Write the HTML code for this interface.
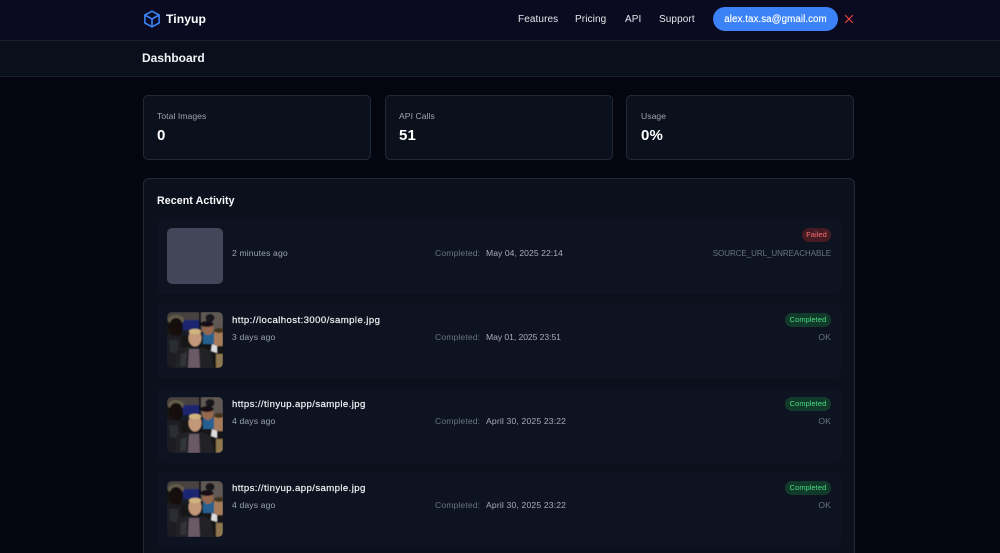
<!DOCTYPE html>
<html lang="en">
<head>
<meta charset="utf-8">
<title>Tinyup Dashboard</title>
<style>
*{box-sizing:border-box;margin:0;padding:0}
html,body{width:1000px;height:553px;overflow:hidden;background:#03060f}
body{position:relative;font-family:"Liberation Sans",sans-serif;color:#fff}
.a{position:absolute;white-space:nowrap}
#nav{left:0;top:0;width:1000px;height:41px;background:#0a0b20;border-bottom:1px solid #1c2031}
#sub{left:0;top:41px;width:1000px;height:36px;background:#0a0f1c;border-bottom:1px solid #181e2d}
#main{left:0;top:77px;width:1000px;height:476px;background:#03060f}
.nl{font-size:10px;color:#e5e7eb;top:13px;line-height:13px;letter-spacing:.1px}
#btn{left:713px;top:7px;width:125px;height:24px;border-radius:12px;background:#3b82f6}
#btnt{left:713px;top:13px;width:125px;font-size:9.8px;line-height:13px;text-align:center;color:#fff;letter-spacing:.05px;-webkit-text-stroke:.15px #fff}
.card{top:95px;height:65px;background:#0b101d;border:1px solid #232836;border-radius:5px}
.cl{top:111px;font-size:8.6px;line-height:11px;color:#9ca3af;letter-spacing:.05px}
.cv{top:127px;font-size:15px;line-height:17px;font-weight:700;color:#fff;letter-spacing:.1px}
#panel{left:143px;top:178px;width:712px;height:390px;background:#0b101d;border:1px solid #232836;border-radius:6px}
.row{left:157px;width:684px;height:75px;background:#0d1320;border-radius:5px}
.th{left:167px;width:56px;height:56px;border-radius:5px;overflow:hidden}
.url{left:232px;font-size:9.6px;line-height:12px;color:#eef0f3;-webkit-text-stroke:.2px #eef0f3}
.u1{letter-spacing:.42px}
.u2{letter-spacing:.4px}
.ago{left:232px;font-size:8.6px;line-height:11px;color:#9ca3af;letter-spacing:.14px}
.cp{left:435px;font-size:8.6px;line-height:11px;color:#6b7280;letter-spacing:.12px}
.dt{left:486px;font-size:8.6px;line-height:11px;color:#a7adb8;letter-spacing:.16px}
.bd{height:14px;border-radius:7px;font-size:7.4px;line-height:14px;text-align:center;letter-spacing:.1px}
.g{left:785px;width:46px;background:#123a2b;color:#4ade80}
.r{left:802px;width:29px;background:#451a22;color:#f87171}
.st{right:169px;font-size:8.6px;line-height:11px;color:#6b7280;letter-spacing:.1px}
</style>
</head>
<body>
<svg width="0" height="0" style="position:absolute">
  <defs>
    <filter id="b" x="-5%" y="-5%" width="110%" height="110%"><feGaussianBlur stdDeviation=".6"/></filter>
    <symbol id="photo" viewBox="0 0 56 56" preserveAspectRatio="none">
      <g filter="url(#b)">
        <rect width="56" height="56" fill="#131418"/>
        <rect x="0" y="0" width="32" height="9" fill="#46433f"/>
        <rect x="14" y="8" width="18" height="10" fill="#1e2670"/>
        <rect x="14" y="18" width="18" height="6" fill="#181a26"/>
        <rect x="32" y="0" width="2" height="56" fill="#0e0f13"/>
        <rect x="34" y="0" width="22" height="20" fill="#5f5952"/>
        <ellipse cx="43" cy="6" rx="4.5" ry="4" fill="#18181c"/>
        <ellipse cx="9" cy="8" rx="8" ry="5" fill="#645b4c"/>
        <ellipse cx="9" cy="15" rx="7" ry="9" fill="#15100c"/>
        <path d="M0 22 L14 24 L18 56 L0 56Z" fill="#1c1d21"/>
        <path d="M2 28 L11 28 L12 42 L3 40Z" fill="#2c2d31"/>
        <rect x="36" y="21" width="13" height="11" fill="#25608f"/>
        <ellipse cx="41" cy="17" rx="5.5" ry="6" fill="#96684e"/>
        <ellipse cx="40" cy="12" rx="6.5" ry="3" fill="#121014"/>
        <ellipse cx="28" cy="26" rx="6.5" ry="8.5" fill="#c2977a"/>
        <ellipse cx="28" cy="19.5" rx="6" ry="2.8" fill="#cfb47e"/>
        <path d="M9 39 Q18 33 27 36 Q38 33 44 40 L47 56 L9 56Z" fill="#212226"/>
        <path d="M14 42 L20 40 L19 54 L13 54Z" fill="#333438"/>
        <path d="M22 37 L32 37 L33 56 L21 56Z" fill="#6a5a66"/>
        <rect x="47" y="20" width="9" height="14" fill="#a67c5a"/>
        <ellipse cx="52" cy="18.5" rx="5" ry="2.5" fill="#43341f"/>
        <path d="M45 32 L50 34 L50 41 L44 39Z" fill="#dcdcde"/>
        <rect x="49" y="42" width="7" height="14" fill="#8f7750"/>
      </g>
    </symbol>
  </defs>
</svg>

<div class="a" id="nav"></div>
<div class="a" id="sub"></div>
<div class="a" id="main"></div>

<svg class="a" style="left:143px;top:10px" width="18" height="18" viewBox="0 0 18 18" fill="none" stroke="#3b82f6" stroke-width="1.6" stroke-linejoin="round" stroke-linecap="round">
  <path d="M9 1.2 L16.1 5 V13 L9 16.8 L1.9 13 V5 Z"/>
  <path d="M1.9 5 L9 9 L16.1 5 M9 9 V16.8"/>
</svg>
<div class="a" style="left:166px;top:11px;font-size:12.2px;line-height:16px;font-weight:700;letter-spacing:.05px">Tinyup</div>

<div class="a nl" style="left:518px">Features</div>
<div class="a nl" style="left:575px">Pricing</div>
<div class="a nl" style="left:625px">API</div>
<div class="a nl" style="left:659px">Support</div>
<div class="a" id="btn"></div>
<div class="a" id="btnt">alex.tax.sa@gmail.com</div>
<svg class="a" style="left:844px;top:14px" width="10" height="10" viewBox="0 0 10 10" fill="none" stroke="#ef4444" stroke-width="1.2" stroke-linecap="round">
  <path d="M1.5 1.5 L8.5 8.5 M8.5 1.5 L1.5 8.5"/>
</svg>

<div class="a" style="left:142px;top:51px;font-size:12px;line-height:15px;font-weight:700;color:#f3f4f6">Dashboard</div>

<div class="a card" style="left:143px;width:228px"></div>
<div class="a card" style="left:385px;width:228px"></div>
<div class="a card" style="left:626px;width:228px"></div>
<div class="a cl" style="left:157px">Total Images</div>
<div class="a cv" style="left:157px">0</div>
<div class="a cl" style="left:399px">API Calls</div>
<div class="a cv" style="left:399px">51</div>
<div class="a cl" style="left:641px">Usage</div>
<div class="a cv" style="left:641px">0%</div>

<div class="a" id="panel"></div>
<div class="a" style="left:157px;top:195px;font-size:10.6px;line-height:13px;font-weight:700;color:#f9fafb;letter-spacing:.1px">Recent Activity</div>

<div class="a row" style="top:219px"></div>
<div class="a th" style="top:228px;background:#414758"></div>
<div class="a ago" style="top:248px">2 minutes ago</div>
<div class="a cp" style="top:248px">Completed:</div>
<div class="a dt" style="top:248px;letter-spacing:.05px">May 04, 2025 22:14</div>
<div class="a bd r" style="top:228px">Failed</div>
<div class="a st" style="top:248px;font-size:8px;letter-spacing:-.04px">SOURCE_URL_UNREACHABLE</div>

<div class="a row" style="top:303px"></div>
<svg class="a th" style="top:312px"><use href="#photo" width="56" height="56"/></svg>
<div class="a url u1" style="top:315px">http://localhost:3000/sample.jpg</div>
<div class="a ago" style="top:332px">3 days ago</div>
<div class="a cp" style="top:332px">Completed:</div>
<div class="a dt" style="top:332px;letter-spacing:-.06px">May 01, 2025 23:51</div>
<div class="a bd g" style="top:313px">Completed</div>
<div class="a st" style="top:332px">OK</div>

<div class="a row" style="top:388px"></div>
<svg class="a th" style="top:397px"><use href="#photo" width="56" height="56"/></svg>
<div class="a url u2" style="top:399px">https://tinyup.app/sample.jpg</div>
<div class="a ago" style="top:416px">4 days ago</div>
<div class="a cp" style="top:416px">Completed:</div>
<div class="a dt" style="top:416px">April 30, 2025 23:22</div>
<div class="a bd g" style="top:397px">Completed</div>
<div class="a st" style="top:416px">OK</div>

<div class="a row" style="top:472px"></div>
<svg class="a th" style="top:481px"><use href="#photo" width="56" height="56"/></svg>
<div class="a url u2" style="top:483px">https://tinyup.app/sample.jpg</div>
<div class="a ago" style="top:500px">4 days ago</div>
<div class="a cp" style="top:500px">Completed:</div>
<div class="a dt" style="top:500px">April 30, 2025 23:22</div>
<div class="a bd g" style="top:481px">Completed</div>
<div class="a st" style="top:500px">OK</div>
</body>
</html>
